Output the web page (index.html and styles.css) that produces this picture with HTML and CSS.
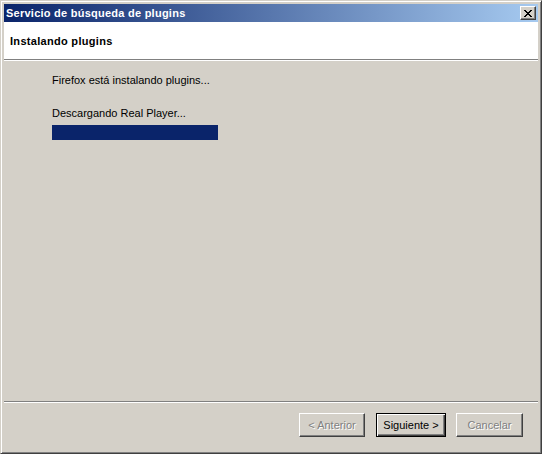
FILE: index.html
```html
<!DOCTYPE html>
<html lang="es">
<head>
<meta charset="utf-8">
<title>Servicio de búsqueda de plugins</title>
<link rel="stylesheet" href="styles.css">
</head>
<body>
<div class="window">
  <div class="titlebar">
    <span class="title">Servicio de búsqueda de plugins</span>
    <span class="close">
      <svg width="8" height="7" viewBox="0 0 8 7" shape-rendering="crispEdges">
        <path fill="#000" d="M0 0h2v1H0zM6 0h2v1H6zM1 1h2v1H1zM5 1h2v1H5zM2 2h4v1H2zM3 3h2v1H3zM2 4h4v1H2zM1 5h2v1H1zM5 5h2v1H5zM0 6h2v1H0zM6 6h2v1H6z"/>
      </svg>
    </span>
  </div>
  <div class="client">
    <div class="header">Instalando plugins</div>
    <div class="content">
      <p class="line first">Firefox está instalando plugins...</p>
      <p class="line second">Descargando Real Player...</p>
      <div class="progress"><div class="bar" style="width:100%"></div></div>
    </div>
    <div class="footer">
      <button class="btn back" disabled>&lt; Anterior</button>
      <button class="btn next default">Siguiente &gt;</button>
      <button class="btn cancel" disabled>Cancelar</button>
    </div>
  </div>
</div>
</body>
</html>
```

FILE: styles.css
```css
html, body {
  margin: 0;
  padding: 0;
  background: #d4d0c8;
}

body {
  font-family: "Liberation Sans", Arial, sans-serif;
  font-size: 11px;
  line-height: 13px;
  color: #000;
}

.window {
  box-sizing: border-box;
  width: 542px;
  height: 454px;
  border: 1px solid;
  border-color: #d4d0c8 #404040 #404040 #d4d0c8;
  box-shadow: inset 1px 1px #fff, inset -1px -1px #808080;
  padding: 3px;
  background: #d4d0c8;
  display: flex;
  flex-direction: column;
}

.titlebar {
  height: 18px;
  flex: 0 0 18px;
  background: linear-gradient(to right, #0a246a, #a6caf0);
  display: flex;
  align-items: center;
  justify-content: space-between;
  padding-left: 2px;
  padding-right: 2px;
}

.title {
  color: #fff;
  font-weight: bold;
  letter-spacing: 0.25px;
  line-height: 18px;
  white-space: nowrap;
}

.close {
  box-sizing: border-box;
  width: 16px;
  height: 14px;
  background: #d4d0c8;
  border: 1px solid;
  border-color: #fff #404040 #404040 #fff;
  box-shadow: inset -1px -1px #808080;
  display: flex;
  align-items: center;
  justify-content: center;
  padding-right: 1px;
}

.close svg {
  display: block;
}

.client {
  flex: 1;
  display: flex;
  flex-direction: column;
}

.header {
  box-sizing: border-box;
  height: 38px;
  flex: 0 0 38px;
  background: #fff;
  font-weight: bold;
  letter-spacing: 0.3px;
  padding: 13px 0 0 6px;
  border-bottom: 1px solid #808080;
  box-shadow: 0 1px #fff;
  margin-bottom: 1px;
}

.content {
  flex: 1;
  padding: 13px 0 0 48px;
  border-bottom: 1px solid #808080;
  box-shadow: 0 1px #fff;
}

.line {
  margin: 0;
  white-space: nowrap;
}

.line.second {
  margin-top: 20px;
}

.progress {
  margin-top: 5px;
  width: 166px;
  height: 15px;
}

.bar {
  height: 100%;
  background: #0a246a;
}

.footer {
  flex: 0 0 47px;
  height: 47px;
  box-sizing: border-box;
  padding: 10px 15px 0 0;
  margin-top: 1px;
  display: flex;
  justify-content: flex-end;
  align-items: flex-start;
}

.btn {
  box-sizing: border-box;
  height: 24px;
  margin: 0;
  padding: 0;
  font-family: "Liberation Sans", Arial, sans-serif;
  font-size: 11px;
  color: #000;
  background: #d4d0c8;
  border: 1px solid;
  border-color: #fff #404040 #404040 #fff;
  box-shadow: inset -1px -1px #808080, inset 1px 1px #d4d0c8;
  border-radius: 0;
  outline: none;
}

.btn:disabled {
  color: #808080;
  text-shadow: 1px 1px #fff;
}

.btn.back {
  width: 66px;
}

.btn.next {
  width: 70px;
  margin-left: 11px;
}

.btn.cancel {
  width: 67px;
  margin-left: 10px;
}

.btn.default {
  border-color: #000;
  box-shadow: inset 1px 1px #fff, inset -1px -1px #404040, inset -2px -2px #808080;
}
```
